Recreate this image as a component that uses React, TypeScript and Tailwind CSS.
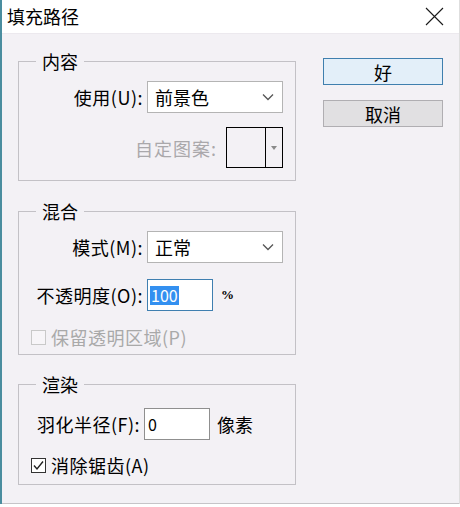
import React from "react";

const font = { fontFamily: '"Noto Sans CJK SC", "Noto Sans", sans-serif' };

const Chevron = () => (
  <svg width="12" height="8" viewBox="0 0 12 8" className="text-[#555]">
    <polyline points="1,1.5 6,6.5 11,1.5" fill="none" stroke="currentColor" strokeWidth="1.3" />
  </svg>
);

const Select = ({ value }: { value: string }) => (
  <div className="w-[136px] h-[32px] bg-white border border-[#b4b4b4] flex items-center justify-between pl-[7px] pr-[8px]">
    <span className="text-[18px] leading-none text-black">{value}</span>
    <Chevron />
  </div>
);

const Group = ({ title, children, className }: { title: string; children: React.ReactNode; className?: string }) => (
  <fieldset className={`border border-[#c3c1c6] ${className ?? ""}`}>
    <legend className="ml-[17px] px-[6px] text-[18px] leading-[20px] text-black">{title}</legend>
    {children}
  </fieldset>
);

const Check = ({ checked, disabled, label }: { checked?: boolean; disabled?: boolean; label: string }) => (
  <div className="flex items-center h-[20px] ml-[12px] gap-[5px]">
    <div
      className={`w-[15px] h-[15px] border flex items-center justify-center ${
        disabled ? "border-[#c9c9c9] bg-[#f7f5f8]" : "border-[#333] bg-white"
      }`}
    >
      {checked && (
        <svg width="13" height="13" viewBox="0 0 13 13">
          <polyline points="2,6.5 5,10 11,2.5" fill="none" stroke="#222" strokeWidth="1.4" />
        </svg>
      )}
    </div>
    <span className={`text-[18px] leading-none tracking-[0.5px] ${disabled ? "text-[#a9a9a9]" : "text-black"}`}>
      {label}
    </span>
  </div>
);

export default function App() {
  return (
    <div className="w-[460px] h-[507px] bg-white flex flex-col" style={font}>
      <div className="flex-1 flex flex-col border-l-2 border-[#4a8d9f] border-r border-r-[#dedede]">
        {/* title bar */}
        <div className="h-[34px] bg-white flex items-center justify-between pl-[5px] pr-[15px] border-b border-[#ece9ee]">
          <span className="text-[18px] text-black">填充路径</span>
          <svg width="19" height="19" viewBox="0 0 19 19">
            <path d="M1 1 L18 18 M18 1 L1 18" stroke="#1a1a1a" strokeWidth="1.1" />
          </svg>
        </div>

        {/* body */}
        <div className="flex-1 bg-[#f3f1f5] flex pl-[16px] pt-[17px] border-b border-[#c6c4c8]">
          <div className="w-[278px] flex flex-col">
            <Group title="内容" className="pb-[12px]">
              <div className="flex items-center mt-[10px]">
                <div className="w-[124px] text-right text-[18px] leading-none tracking-[0.5px] text-black">使用(U):</div>
                <div className="ml-[4px]">
                  <Select value="前景色" />
                </div>
              </div>
              <div className="flex items-center justify-end mt-[14px] pr-[12px]">
                <span className="text-[18px] leading-none tracking-[1px] text-[#aaa8ab]">自定图案:</span>
                <div className="ml-[9px] w-[57px] h-[41px] border-[1.5px] border-black flex">
                  <div className="flex-1 border-r-[1.5px] border-black" />
                  <div className="w-[16px] flex items-center justify-center">
                    <div className="w-0 h-0 border-l-[3px] border-r-[3px] border-t-[4px] border-l-transparent border-r-transparent border-t-[#8a8a8a]" />
                  </div>
                </div>
              </div>
            </Group>

            <Group title="混合" className="mt-[20px] pb-[7px]">
              <div className="flex items-center mt-[10px]">
                <div className="w-[124px] text-right text-[18px] leading-none tracking-[0.5px] text-black">模式(M):</div>
                <div className="ml-[4px]">
                  <Select value="正常" />
                </div>
              </div>
              <div className="flex items-center mt-[16px]">
                <div className="w-[124px] text-right text-[18px] leading-none tracking-[0.5px] text-black">不透明度(O):</div>
                <div className="ml-[4px] w-[66px] h-[32px] bg-white border border-[#3f7fb0] flex items-center pl-[2px]">
                  <span className="bg-[#3390f0] text-white text-[16px] leading-[19px] px-[1px]">100</span>
                </div>
                <span className="ml-[8px] text-[13px] font-bold text-black" style={{ fontFamily: '"Liberation Serif", serif' }}>
                  %
                </span>
              </div>
              <div className="mt-[16px]">
                <Check disabled label="保留透明区域(P)" />
              </div>
            </Group>

            <Group title="渲染" className="mt-[19px] pb-[9px]">
              <div className="flex items-center mt-[14px]">
                <div className="w-[121px] text-right text-[18px] leading-none tracking-[0.5px] text-black">羽化半径(F):</div>
                <div className="ml-[4px] w-[66px] h-[32px] bg-white border border-[#8f8f8f] flex items-center pl-[3px]">
                  <span className="text-[16px] leading-none text-black">0</span>
                </div>
                <span className="ml-[7px] text-[18px] leading-none text-black">像素</span>
              </div>
              <div className="mt-[15px]">
                <Check checked label="消除锯齿(A)" />
              </div>
            </Group>
          </div>

          <div className="ml-[27px] mt-[7px] flex flex-col gap-[15px]">
            <button className="w-[120px] h-[27px] bg-[#e3eff9] border border-[#3f7fae] text-[18px] leading-none text-black flex items-center justify-center">
              好
            </button>
            <button className="w-[120px] h-[27px] bg-[#e1e0e2] border border-[#b0aeb2] text-[18px] leading-none text-black flex items-center justify-center">
              取消
            </button>
          </div>
        </div>
      </div>
      <div className="h-[3px] bg-white" />
    </div>
  );
}
